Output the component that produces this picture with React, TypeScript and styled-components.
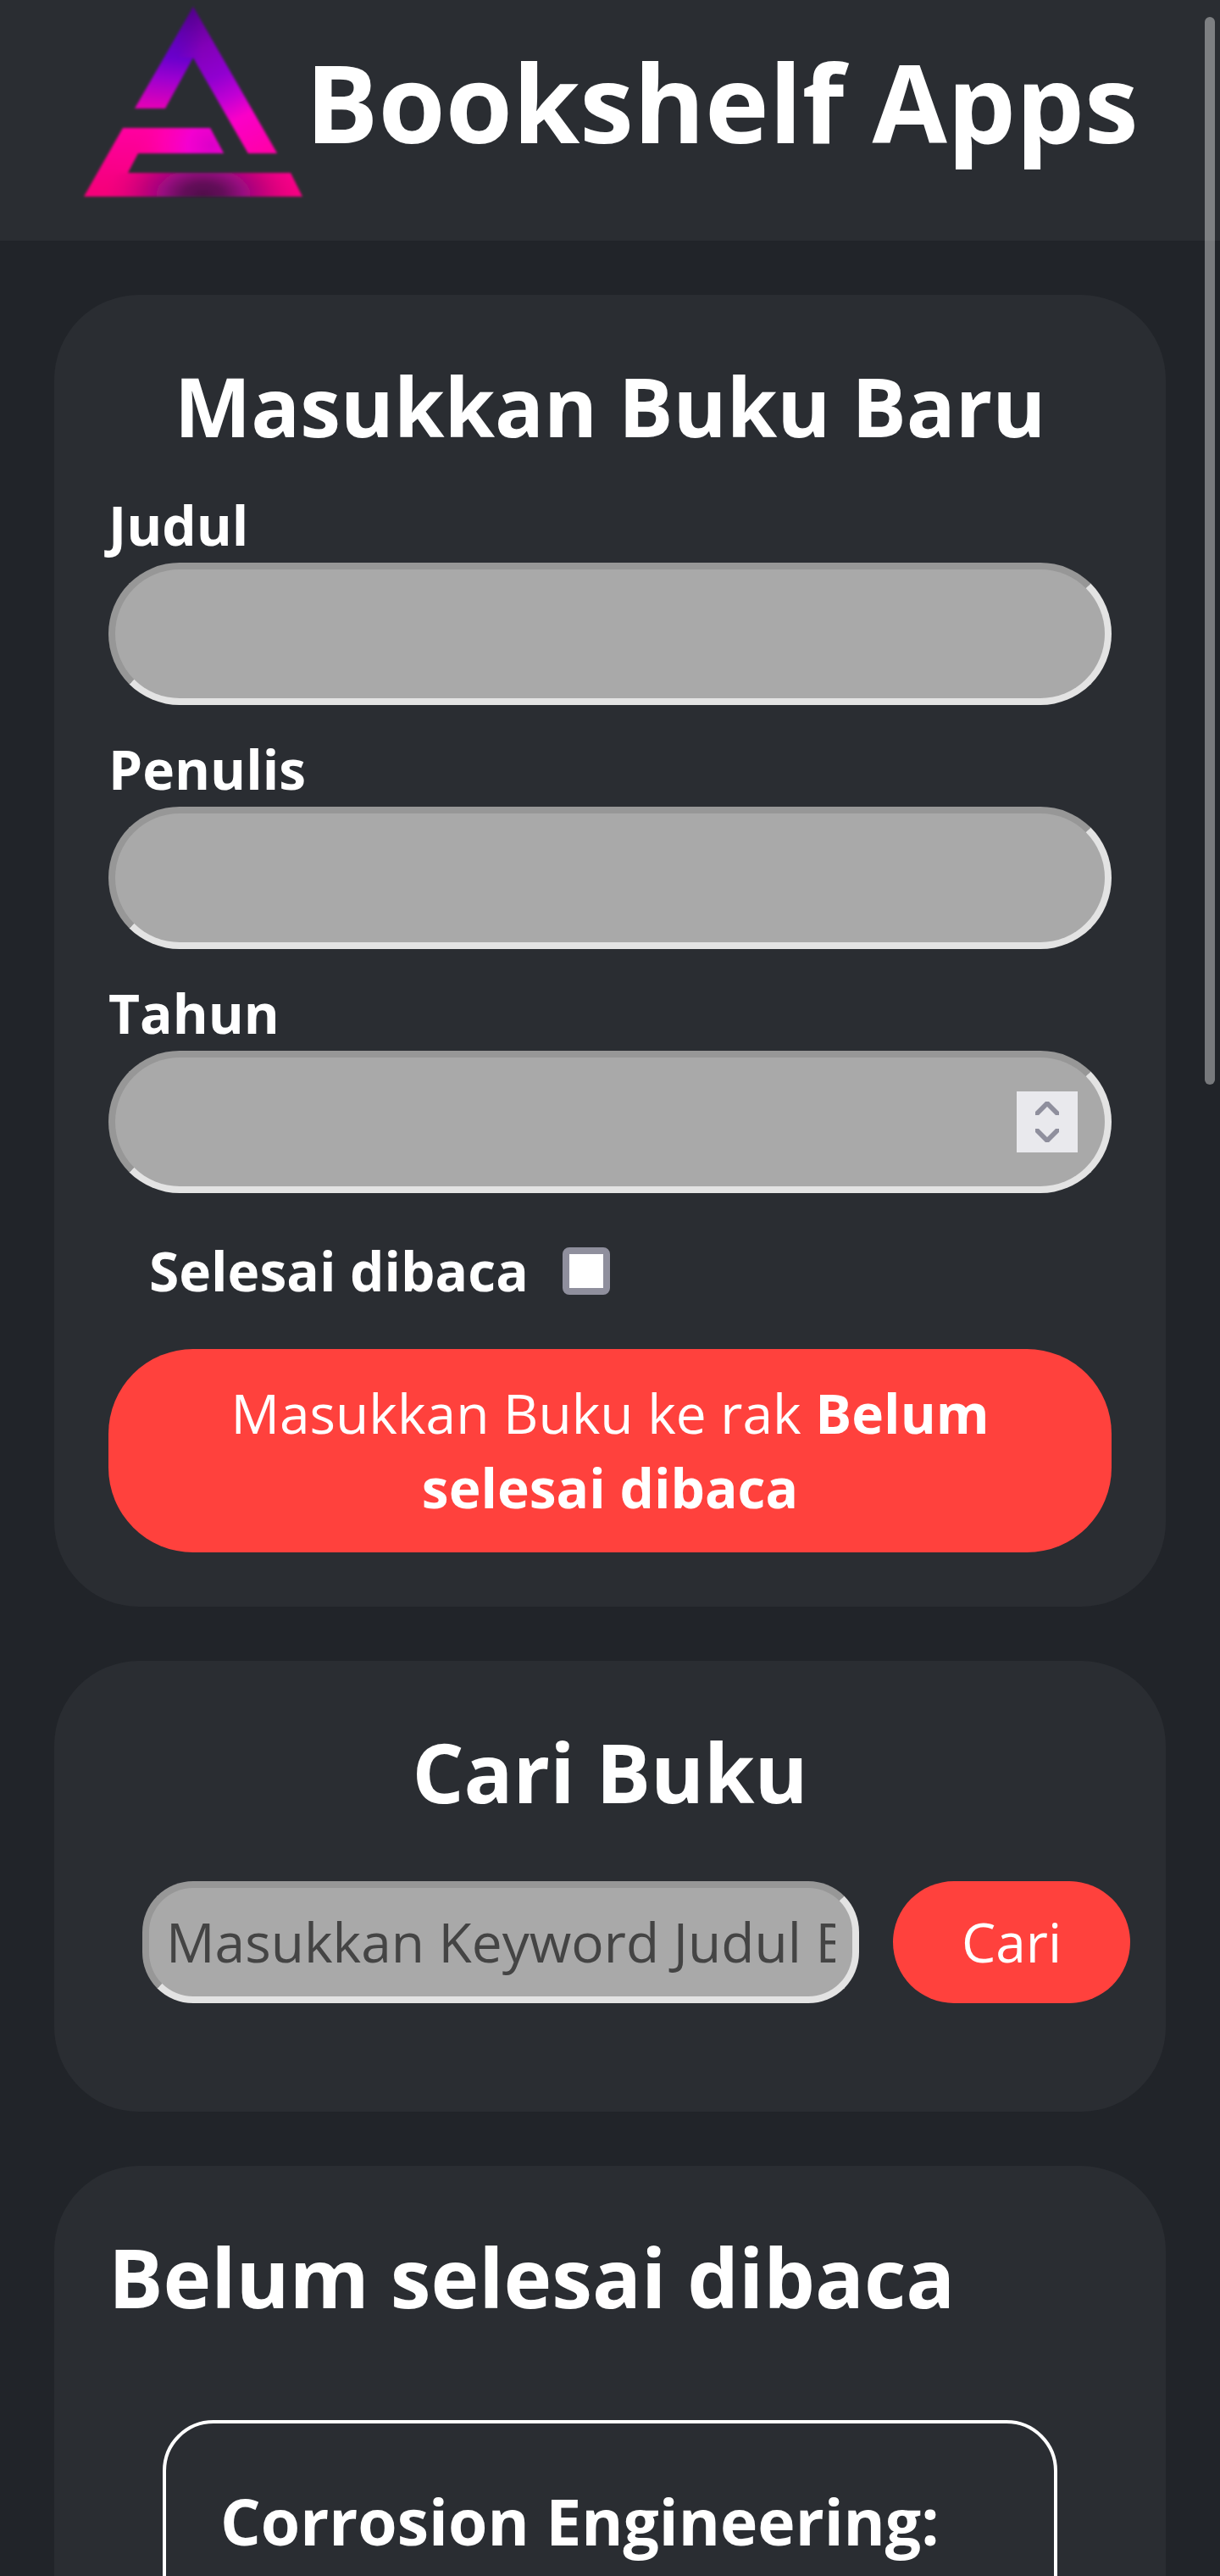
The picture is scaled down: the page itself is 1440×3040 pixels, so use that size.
import React, { useState } from "react";
import styled, { createGlobalStyle } from "styled-components";

const GlobalStyle = createGlobalStyle`
  *, *::before, *::after { box-sizing: border-box; }
  body { margin: 0; background: #212429; }
  body, input, button { font-family: "Open Sans", "Noto Sans", sans-serif; font-size: 64px; }
`;

const Screen = styled.div`
  height: 100vh;
  overflow-x: hidden;
  overflow-y: auto;
  scrollbar-width: none;
  background: #212429;
  color: #fff;
  line-height: 88px;
`;

const ScrollThumb = styled.div`
  position: fixed;
  top: 20px;
  right: 6px;
  width: 12px;
  height: 1260px;
  border-radius: 6px;
  background: rgba(249, 249, 250, 0.4);
`;

const Header = styled.header`
  display: flex;
  justify-content: center;
  align-items: center;
  padding-bottom: 44px;
  background: #2a2d32;
`;

const LogoSvg = styled.svg`
  flex: none;
  width: 264px;
  height: 240px;
`;

const SiteTitle = styled.h1`
  margin: 0;
  font-size: 128px;
  line-height: 176px;
  white-space: nowrap;
`;

const Main = styled.main`
  display: flex;
  flex-direction: column;
  gap: 64px;
  padding: 64px;
`;

const Card = styled.section`
  padding: 64px;
  border-radius: 100px;
  background: #2a2d32;
`;

const CardTitle = styled.h2<{ $align?: "left" | "center" }>`
  margin: 0;
  font-size: 96px;
  line-height: 134px;
  text-align: ${(p) => p.$align ?? "center"};
`;

const Form = styled.form`
  display: flex;
  flex-direction: column;
  gap: 32px;
  margin-top: 30px;
`;

const Field = styled.div`
  display: flex;
  flex-direction: column;
`;

const Label = styled.label`
  font-weight: 700;
`;

const TextInput = styled.input`
  width: 100%;
  height: 168px;
  padding: 0 40px;
  border: 8px solid;
  border-color: #979797 #e3e3e3 #e3e3e3 #979797;
  border-radius: 84px;
  outline: none;
  background: #a9a9a9;
  color: #000;
  appearance: textfield;
  &::-webkit-inner-spin-button,
  &::-webkit-outer-spin-button {
    appearance: none;
    margin: 0;
  }
`;

const NumberBox = styled.div`
  position: relative;
`;

const Spinner = styled.div`
  position: absolute;
  top: 48px;
  right: 40px;
  display: flex;
  flex-direction: column;
  width: 72px;
  height: 72px;
  background: #e9e9ed;
`;

const SpinButton = styled.button<{ $end?: boolean }>`
  flex: 1;
  display: flex;
  justify-content: center;
  align-items: ${(p) => (p.$end ? "flex-start" : "flex-end")};
  padding: 8px 0;
  border: 0;
  background: none;
`;

const CheckRow = styled.div`
  display: flex;
  align-items: center;
  gap: 40px;
  padding: 16px 48px;
`;

const CheckBox = styled.input`
  appearance: none;
  width: 56px;
  height: 56px;
  margin: 0;
  border: 8px solid #8f8f9d;
  border-radius: 8px;
  background: #fff;
  &:checked {
    background: #0060df;
  }
`;

const RedButton = styled.button`
  padding: 32px 80px;
  border: 0;
  border-radius: 100px;
  background: #ff413d;
  color: #fff;
  line-height: 88px;
`;

const SearchForm = styled.form`
  display: flex;
  gap: 40px;
  margin: 62px -22px 64px 40px;
`;

const SearchInput = styled(TextInput)`
  flex: 1;
  min-width: 0;
  height: 144px;
  padding: 0 20px 2px;
  border-radius: 60px;
  &::placeholder {
    color: #444;
    opacity: 1;
  }
`;

const SearchButton = styled(RedButton)`
  flex: none;
  width: 280px;
  padding: 28px 0;
`;

const Shelf = styled.div`
  padding: 102px 64px 64px;
`;

const Book = styled.article`
  min-height: 480px;
  padding: 64px;
  border: 4px solid #fff;
  border-radius: 60px;
`;

const BookTitle = styled.h3`
  margin: 0;
  font-size: 75px;
  line-height: 102px;
`;

function Logo() {
  return (
    <LogoSvg viewBox="0 0 264 240" role="img" aria-label="Logo">
      <defs>
        <linearGradient id="base" gradientUnits="userSpaceOnUse" x1="115" y1="8" x2="95" y2="232">
          <stop offset="0" stopColor="#4c0088" />
          <stop offset="0.14" stopColor="#6000b4" />
          <stop offset="0.27" stopColor="#6a00cc" />
          <stop offset="0.38" stopColor="#9c00d0" />
          <stop offset="0.53" stopColor="#e000b8" />
          <stop offset="0.66" stopColor="#ff00a0" />
          <stop offset="1" stopColor="#f5007a" />
        </linearGradient>
        <linearGradient id="right" gradientUnits="userSpaceOnUse" x1="132" y1="8" x2="214" y2="181">
          <stop offset="0" stopColor="#54008c" />
          <stop offset="0.25" stopColor="#8200b8" />
          <stop offset="0.45" stopColor="#9000d0" />
          <stop offset="0.6" stopColor="#c000d4" />
          <stop offset="0.74" stopColor="#fa00c8" />
          <stop offset="1" stopColor="#ff00a8" />
        </linearGradient>
        <linearGradient id="fade" gradientUnits="userSpaceOnUse" x1="112" y1="0" x2="142" y2="0">
          <stop offset="0" stopColor="#fff" stopOpacity="0" />
          <stop offset="1" stopColor="#fff" />
        </linearGradient>
        <mask id="rightMask">
          <rect width="264" height="240" fill="url(#fade)" />
        </mask>
        <radialGradient id="glow" gradientUnits="userSpaceOnUse" cx="154" cy="172" r="96">
          <stop offset="0" stopColor="#dc00c8" />
          <stop offset="0.3" stopColor="#f400d0" />
          <stop offset="0.6" stopColor="#ff00b8" stopOpacity="0.7" />
          <stop offset="1" stopColor="#ff0094" stopOpacity="0" />
        </radialGradient>
        <radialGradient
          id="shade"
          gradientUnits="userSpaceOnUse"
          cx="0"
          cy="0"
          r="1"
          gradientTransform="translate(144 230) scale(120 70)"
        >
          <stop offset="0" stopColor="#500c4a" />
          <stop offset="0.2" stopColor="#640c5a" />
          <stop offset="0.4" stopColor="#980a80" />
          <stop offset="0.6" stopColor="#b80078" stopOpacity="0.8" />
          <stop offset="1" stopColor="#f0007c" stopOpacity="0" />
        </radialGradient>
        <filter id="soft" x="-5%" y="-5%" width="110%" height="110%">
          <feGaussianBlur stdDeviation="1.4" />
        </filter>
      </defs>
      <g filter="url(#soft)">
        <path d="M132 8 63 128H99L132 68 197 181H231Z" fill="url(#base)" />
        <path d="M132 8 99 68 132 68 197 181H231Z" fill="url(#right)" mask="url(#rightMask)" />
        <path d="M49 151H152L168 181H67L55 204H247L261 232H3Z" fill="url(#base)" />
        <path d="M49 151H152L168 181H67L60 194H24Z" fill="url(#glow)" />
        <path d="M55 204H247L261 232H3L17 204Z" fill="url(#shade)" />
      </g>
    </LogoSvg>
  );
}

function Chevron({ down }: { down?: boolean }) {
  return (
    <svg width="28" height="16" viewBox="0 0 28 16" aria-hidden="true">
      <path
        d={down ? "M0 0H4L14 10 24 0H28V4L16 16H12L0 4Z" : "M0 16H4L14 6 24 16H28V12L16 0H12L0 12Z"}
        fill="#8f8f9d"
      />
    </svg>
  );
}

export default function App() {
  const [year, setYear] = useState("");
  const [done, setDone] = useState(false);
  const step = (n: number) => setYear((y) => String(Number(y || 0) + n));

  return (
    <>
      <GlobalStyle />
      <Screen>
        <Header>
          <Logo />
          <SiteTitle>Bookshelf Apps</SiteTitle>
        </Header>
        <Main>
          <Card>
            <CardTitle>Masukkan Buku Baru</CardTitle>
            <Form onSubmit={(e) => e.preventDefault()}>
              <Field>
                <Label htmlFor="judul">Judul</Label>
                <TextInput id="judul" type="text" />
              </Field>
              <Field>
                <Label htmlFor="penulis">Penulis</Label>
                <TextInput id="penulis" type="text" />
              </Field>
              <Field>
                <Label htmlFor="tahun">Tahun</Label>
                <NumberBox>
                  <TextInput
                    id="tahun"
                    type="number"
                    value={year}
                    onChange={(e) => setYear(e.target.value)}
                  />
                  <Spinner>
                    <SpinButton type="button" aria-label="Tambah tahun" onClick={() => step(1)}>
                      <Chevron />
                    </SpinButton>
                    <SpinButton $end type="button" aria-label="Kurangi tahun" onClick={() => step(-1)}>
                      <Chevron down />
                    </SpinButton>
                  </Spinner>
                </NumberBox>
              </Field>
              <CheckRow>
                <Label htmlFor="selesai">Selesai dibaca</Label>
                <CheckBox
                  id="selesai"
                  type="checkbox"
                  checked={done}
                  onChange={(e) => setDone(e.target.checked)}
                />
              </CheckRow>
              <RedButton type="submit">
                Masukkan Buku ke rak <b>{done ? "Selesai dibaca" : "Belum selesai dibaca"}</b>
              </RedButton>
            </Form>
          </Card>
          <Card>
            <CardTitle>Cari Buku</CardTitle>
            <SearchForm onSubmit={(e) => e.preventDefault()}>
              <SearchInput type="text" aria-label="Judul Buku" placeholder="Masukkan Keyword Judul Buku" />
              <SearchButton type="submit">Cari</SearchButton>
            </SearchForm>
          </Card>
          <Card>
            <CardTitle $align="left">Belum selesai dibaca</CardTitle>
            <Shelf>
              <Book>
                <BookTitle>Corrosion Engineering:</BookTitle>
              </Book>
            </Shelf>
          </Card>
        </Main>
      </Screen>
      <ScrollThumb />
    </>
  );
}
